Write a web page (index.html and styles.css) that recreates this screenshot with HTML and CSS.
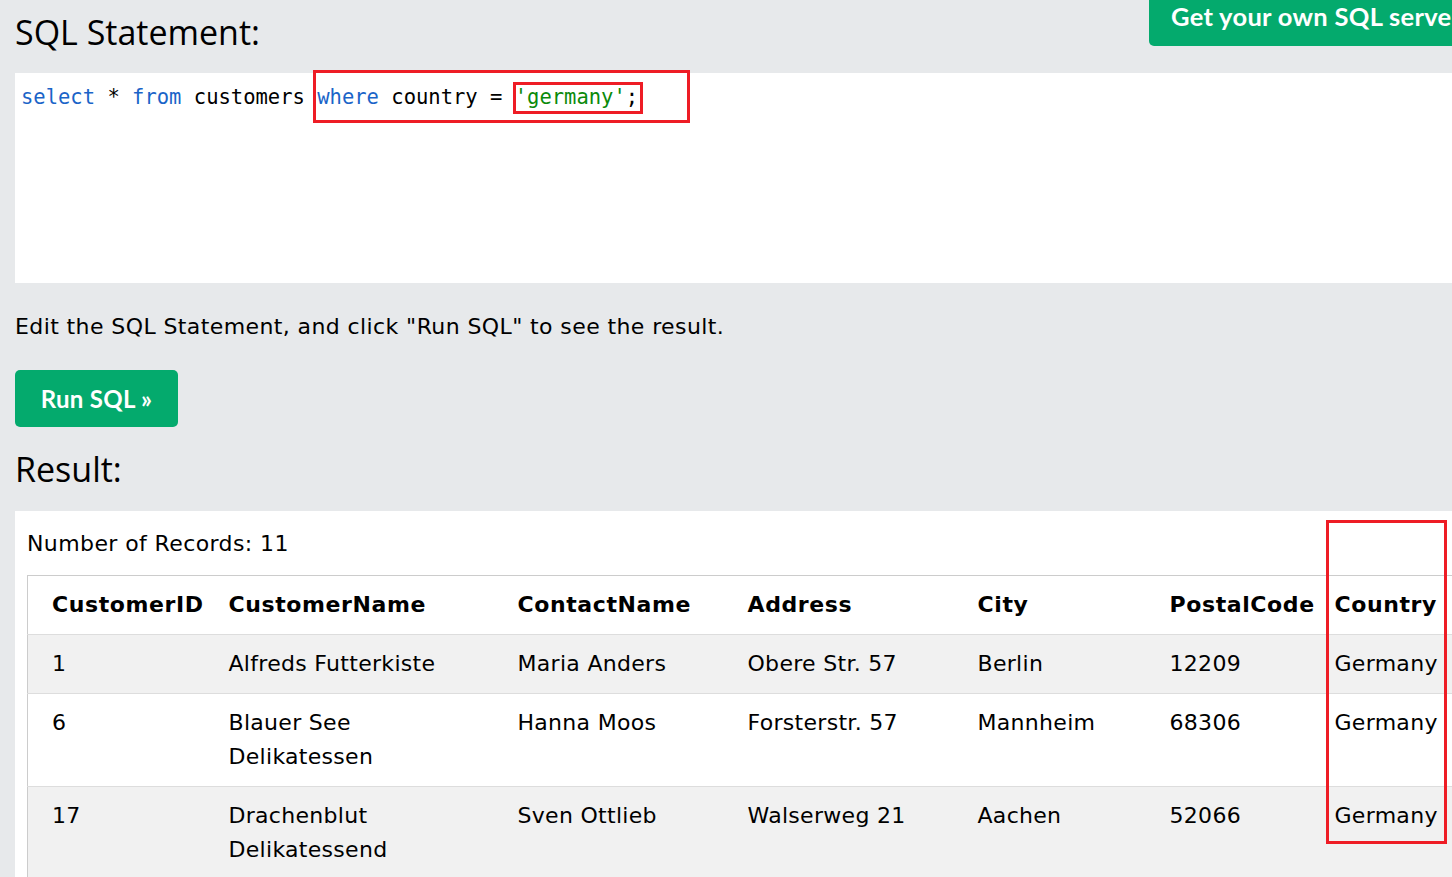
FILE: index.html
```html
<!DOCTYPE html>
<html lang="en">
<head>
<meta charset="utf-8">
<title>SQL Tryit</title>
<link rel="stylesheet" href="styles.css">
</head>
<body>
<div class="page">
  <div class="header">
    <h2 class="heading">SQL Statement:</h2>
    <a class="server-btn">Get your own SQL server</a>
  </div>
  <div class="code-box">
    <div class="code-line"><span class="kw">select</span> * <span class="kw">from</span> customers <span class="kw">where</span> country = <span class="str">'germany'</span>;</div>
    <div class="mark mark-where"></div>
    <div class="mark mark-value"></div>
  </div>
  <p class="hint">Edit the SQL Statement, and click "Run SQL" to see the result.</p>
  <button class="run-btn">Run SQL »</button>
  <h2 class="heading result-heading">Result:</h2>
  <div class="result-panel">
    <p class="records">Number of Records: 11</p>
    <table class="data">
      <colgroup>
        <col class="c1"><col class="c2"><col class="c3"><col class="c4"><col class="c5"><col class="c6"><col class="c7">
      </colgroup>
      <thead>
        <tr><th>CustomerID</th><th>CustomerName</th><th>ContactName</th><th>Address</th><th>City</th><th>PostalCode</th><th>Country</th></tr>
      </thead>
      <tbody>
        <tr><td>1</td><td>Alfreds Futterkiste</td><td>Maria Anders</td><td>Obere Str. 57</td><td>Berlin</td><td>12209</td><td>Germany</td></tr>
        <tr><td>6</td><td>Blauer See Delikatessen</td><td>Hanna Moos</td><td>Forsterstr. 57</td><td>Mannheim</td><td>68306</td><td>Germany</td></tr>
        <tr><td>17</td><td>Drachenblut Delikatessend</td><td>Sven Ottlieb</td><td>Walserweg 21</td><td>Aachen</td><td>52066</td><td>Germany</td></tr>
      </tbody>
    </table>
    <div class="mark mark-country"></div>
  </div>
</div>
</body>
</html>
```

FILE: styles.css
```css
html, body {
  margin: 0;
  padding: 0;
  overflow: hidden;
  background: #e7e9eb;
}
body {
  font-family: "DejaVu Sans", Verdana, sans-serif;
  color: #000;
}
.page {
  width: 1454px;
  padding-left: 15px;
}
.header {
  display: flex;
  align-items: flex-start;
}
.heading {
  font-family: "Open Sans", "Noto Sans", sans-serif;
  font-weight: 400;
  font-size: 34px;
  line-height: 41px;
  margin: 12px 0 0;
  flex: 1;
}
.server-btn {
  width: 320px;
  box-sizing: border-box;
  padding: 2px 22px 15px;
  background: #04aa6d;
  color: #fff;
  font-family: Lato, "Open Sans", sans-serif;
  font-weight: 700;
  font-size: 25.5px;
  letter-spacing: 0.3px;
  line-height: 29px;
  border-bottom-left-radius: 5px;
  white-space: nowrap;
}
.code-box {
  position: relative;
  margin-top: 20px;
  height: 210px;
  box-sizing: border-box;
  padding: 12px 5px 10px 6px;
  background: #fff;
  font-family: "DejaVu Sans Mono", "Liberation Mono", monospace;
  font-size: 20.5px;
  line-height: 24px;
}
.code-line { white-space: pre; }
.kw { color: #1a64c8; }
.str { color: #0a8a0a; }
.mark {
  position: absolute;
  box-sizing: border-box;
  border: 3px solid #ee1c25;
}
.mark-where { left: 298px; top: -3px; width: 377px; height: 53px; }
.mark-value { left: 498px; top: 9px; width: 130px; height: 32px; }
.hint {
  margin: 27px 0 0;
  font-size: 22px;
  letter-spacing: 0.4px;
  line-height: 34px;
}
.run-btn {
  display: flex;
  align-items: center;
  justify-content: center;
  margin-top: 26px;
  width: 163px;
  height: 57px;
  border: 0;
  border-radius: 5px;
  background: #04aa6d;
  color: #fff;
  font-family: Lato, "Open Sans", sans-serif;
  font-weight: 700;
  font-size: 24px;
  letter-spacing: 0.3px;
  padding: 0;
}
.result-heading {
  margin-top: 22px;
}
.result-panel {
  position: relative;
  margin-top: 21px;
  background: #fff;
  padding: 16px 0 0 12px;
}
.records {
  margin: 0;
  font-size: 22px;
  letter-spacing: 0.4px;
  line-height: 34px;
}
.data {
  margin-top: 14px;
  border-collapse: collapse;
  table-layout: fixed;
  width: 1450px;
  border: 1px solid #ccc;
  font-size: 22px;
  letter-spacing: 0.3px;
  line-height: 34px;
}
.c1 { width: 189px; }
.c2 { width: 289px; }
.c3 { width: 230px; }
.c4 { width: 230px; }
.c5 { width: 192px; }
.c6 { width: 165px; }
.c7 { width: 155px; }
.data th, .data td {
  padding: 12px;
  text-align: left;
  vertical-align: top;
  border-bottom: 1px solid #ddd;
}
.data th:first-child, .data td:first-child {
  padding-left: 24px;
}
.data th { font-weight: 700; background: #fff; letter-spacing: 0.6px; }
.data tbody tr:nth-child(odd) { background: #f1f1f1; }
.data tbody tr:nth-child(even) { background: #fff; }
.mark-country { left: 1311px; top: 9px; width: 121px; height: 324px; }
```
